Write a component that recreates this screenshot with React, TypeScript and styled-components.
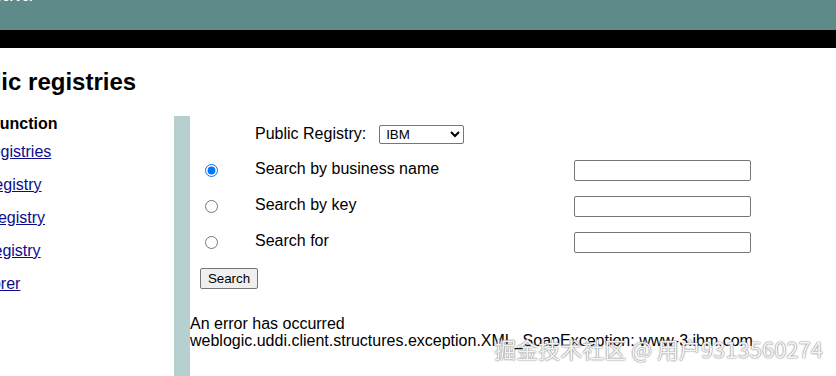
import { createGlobalStyle, styled } from "styled-components";

const GlobalStyle = createGlobalStyle`
    html, body {
        margin: 0;
        padding: 0;
        background: #ffffff;
        overflow: hidden;
    }
    body {
        font-family: "Liberation Sans", Arial, sans-serif;
        color: #000000;
    }
`

const Header = styled.div`
    height: 30px;
    background-color: #5f8a8a;
    overflow: hidden;
    color: #ffffff;
`

const Brand = styled.div`
    margin-top: -10px;
    margin-left: -72px;
    font-size: 13px;
    line-height: 14px;
    font-weight: bold;
`

const BlackBar = styled.div`
    height: 18px;
    background-color: #000000;
`

const Page = styled.div`
    margin-left: -123px;
`

const Title = styled.h2`
    margin: 20px 0 0 -13px;
    font-size: 24px;
    line-height: 28px;
    font-weight: bold;
    white-space: nowrap;
`

const Main = styled.div`
    display: grid;
    grid-template-columns: 297px 16px 1fr;
    margin-top: 20px;
    min-height: 270px;
`

const Nav = styled.div`
    display: flex;
    flex-direction: column;
    white-space: nowrap;
`

const NavHead = styled.div`
    margin-top: -1px;
    font-size: 16px;
    line-height: 18px;
    font-weight: bold;
`

const NavList = styled.div`
    display: flex;
    flex-direction: column;
    gap: 15px;
    margin-top: 10px;
`

const NavLink = styled.a<{ $indent?: number }>`
    margin-left: ${(p) => p.$indent ?? 0}px;
    font-size: 16px;
    line-height: 18px;
    color: #0b0b8c;
    text-decoration: underline;
`

const Stripe = styled.div`
    background-color: #b6d0cf;
`

const Content = styled.div`
    font-size: 16px;
`

const FormGrid = styled.div`
    display: grid;
    grid-template-columns: 65px 319px 177px;
    grid-auto-rows: 36px;
    align-items: center;
`

const RegistryCell = styled.div`
    grid-column: 2 / 4;
    display: flex;
    align-items: center;
    gap: 13px;
`

const Radio = styled.input`
    margin: 1px 0 0 15px;
    width: 13px;
    height: 13px;
`

const RowLabel = styled.span`
    margin-top: -2px;
`

const Select = styled.select`
    width: 85px;
    height: 19px;
    font-family: "Liberation Sans", Arial, sans-serif;
    font-size: 13.33px;
    border: 1px solid #767676;
    border-radius: 2px;
    background: #ffffff;
    padding: 0 0 0 2px;
`

const TextField = styled.input`
    box-sizing: border-box;
    width: 177px;
    height: 21px;
    border: 1px solid #767676;
    border-radius: 2px;
    padding: 1px 2px;
    margin-top: 1px;
`

const SearchButton = styled.button`
    margin: 8px 0 0 10px;
    height: 21px;
    width: 58px;
    padding: 0 6px;
    font-family: "Liberation Sans", Arial, sans-serif;
    font-size: 13.33px;
    background: #efefef;
    border: 1px solid #767676;
    border-radius: 2px;
    color: #000000;
`

const ErrorText = styled.div`
    margin-top: 26px;
    font-size: 16px;
    line-height: 17px;
    white-space: nowrap;
`

const Watermark = styled.div`
    position: fixed;
    right: 13px;
    bottom: 13px;
    font-family: "Noto Sans CJK SC", "Liberation Sans", sans-serif;
    font-size: 22px;
    line-height: 30px;
    color: rgba(255, 255, 255, 0.92);
    text-shadow: 0 0 1px #707070, 0 0 2px #8a8a8a;
    white-space: nowrap;
`

const links = [
    { text: "Search Public Registries", indent: 0 },
    { text: "Modify Private Registry", indent: 0 },
    { text: "Search Private Registry", indent: 0 },
    { text: "Delete Private Registry", indent: 0 },
    { text: "Setup UDDI Explorer", indent: -6 },
]

const rows = ["Search by business name", "Search by key", "Search for"]

export default function App() {
    return (
        <>
            <GlobalStyle />
            <Header>
                <Brand>
                    WebLogic Server
                    <br />
                    Console
                </Brand>
            </Header>
            <BlackBar />
            <Page>
                <Title>Search public registries</Title>
                <Main>
                    <Nav>
                        <NavHead>UDDI Explorer Function</NavHead>
                        <NavList>
                            {links.map((l) => (
                                <NavLink key={l.text} href="#" $indent={l.indent}>{l.text}</NavLink>
                            ))}
                        </NavList>
                    </Nav>
                    <Stripe />
                    <Content>
                        <FormGrid>
                            <span />
                            <RegistryCell>
                                <span>Public Registry:</span>
                                <Select defaultValue="IBM">
                                    <option value="IBM">IBM</option>
                                    <option value="Microsoft">Microsoft</option>
                                </Select>
                            </RegistryCell>
                            {rows.map((r, i) => [
                                <Radio key={r + "r"} type="radio" name="search" defaultChecked={i === 0} />,
                                <RowLabel key={r + "l"}>{r}</RowLabel>,
                                <TextField key={r + "t"} type="text" />,
                            ])}
                        </FormGrid>
                        <SearchButton>Search</SearchButton>
                        <ErrorText>
                            An error has occurred
                            <br />
                            weblogic.uddi.client.structures.exception.XML_SoapException: www-3.ibm.com
                        </ErrorText>
                    </Content>
                </Main>
            </Page>
            <Watermark>掘金技术社区 @ 用户9313560274</Watermark>
        </>
    )
}
